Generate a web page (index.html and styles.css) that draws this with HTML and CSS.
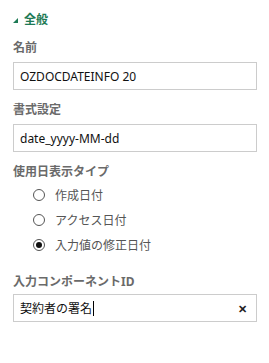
FILE: index.html
```html
<!DOCTYPE html>
<html lang="ja">
<head>
    <meta charset="UTF-8">
    <meta name="viewport" content="width=device-width, initial-scale=1.0">
    <title>全般</title>
    <link rel="stylesheet" href="styles.css">
</head>
<body>
    <div class="panel">
        <div class="section-head">
            <span class="caret"></span>
            <span>全般</span>
        </div>

        <div class="field">
            <label class="field-label">名前</label>
            <div class="text-box">OZDOCDATEINFO 20</div>
        </div>

        <div class="field">
            <label class="field-label">書式設定</label>
            <div class="text-box">date_yyyy-MM-dd</div>
        </div>

        <div class="field">
            <label class="field-label">使用日表示タイプ</label>
            <div class="radio-list">
                <div class="radio-row"><span class="radio"></span>作成日付</div>
                <div class="radio-row"><span class="radio"></span>アクセス日付</div>
                <div class="radio-row"><span class="radio checked"></span>入力値の修正日付</div>
            </div>
        </div>

        <div class="field last">
            <label class="field-label">入力コンポーネントID</label>
            <div class="text-box with-clear">
                <span>契約者の署名<span class="cursor"></span></span>
                <span class="clear">&#x2715;</span>
            </div>
        </div>
    </div>
</body>
</html>
```

FILE: styles.css
```css
body {
    margin: 0;
    background: #fff;
    font-family: "Noto Sans", "Noto Sans CJK JP", sans-serif;
    font-size: 12px;
    color: #222;
}
.panel {
    padding: 10px 12px 0 13px;
}
.section-head {
    display: flex;
    align-items: center;
    gap: 6px;
    color: #1d7a55;
    font-weight: bold;
    font-size: 12px;
    height: 18px;
}
.caret {
    width: 0;
    height: 0;
    border-left: 5px solid transparent;
    border-bottom: 5px solid #1d7a55;
    margin-top: 2px;
}
.field {
    margin-top: 12px;
}
.field-label {
    display: block;
    color: #6a6a6a;
    font-weight: bold;
    font-size: 12px;
    line-height: 16px;
    margin-bottom: 6px;
}
.field.last {
    margin-top: 17px;
}
.last .field-label {
    margin-bottom: 4px;
}
.text-box {
    box-sizing: border-box;
    height: 28px;
    border: 1px solid #ccc;
    padding: 0 6px;
    display: flex;
    align-items: center;
    font-size: 12px;
    color: #111;
}
.with-clear {
    justify-content: space-between;
}
.cursor {
    display: inline-block;
    width: 1px;
    height: 15px;
    background: #000;
    vertical-align: -3px;
    margin-left: 1px;
}
.clear {
    font-size: 11px;
    font-weight: bold;
    color: #222;
    margin-right: 3px;
}
.radio-list {
    padding-left: 20px;
    margin-top: -4px;
}
.radio-row {
    display: flex;
    align-items: center;
    gap: 10px;
    height: 25px;
    color: #555;
    font-size: 12px;
}
.radio {
    box-sizing: border-box;
    width: 12px;
    height: 12px;
    border: 1px solid #555;
    border-radius: 50%;
    display: flex;
    align-items: center;
    justify-content: center;
}
.radio.checked::after {
    content: "";
    width: 6px;
    height: 6px;
    border-radius: 50%;
    background: #111;
}
```
